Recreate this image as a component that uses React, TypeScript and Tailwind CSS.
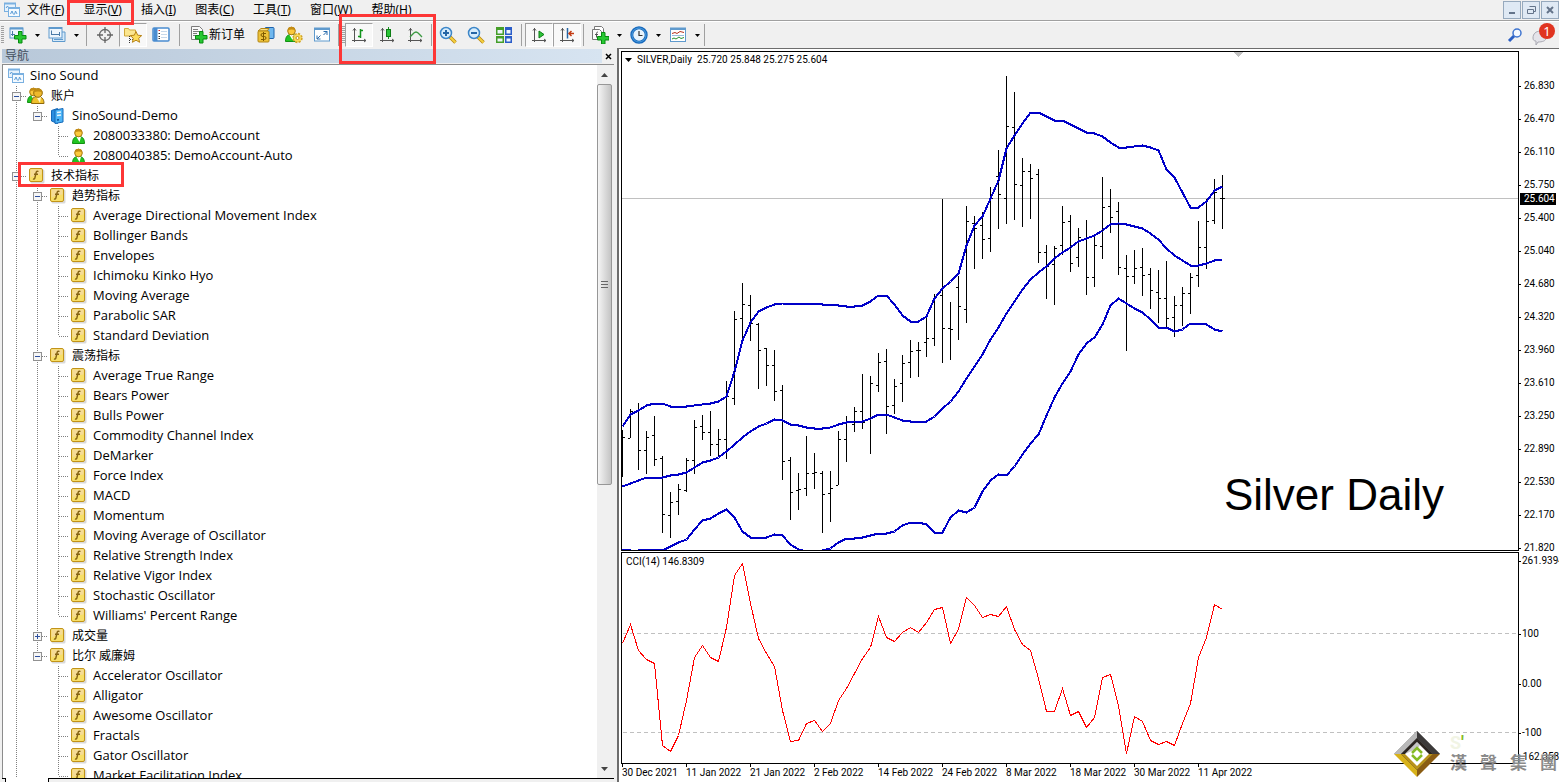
import { useState } from 'react'
import type { ReactNode } from 'react'
import clsx from 'clsx'

type TreeNode = {
    label: string
    icon: 'terminal' | 'accounts' | 'server' | 'user' | 'fn'
    children?: TreeNode[]
    closed?: boolean
    marked?: boolean
}

const fn = (label: string): TreeNode => ({ label, icon: 'fn' })

const TREE: TreeNode[] = [
    {
        label: '账户',
        icon: 'accounts',
        children: [
            {
                label: 'SinoSound-Demo',
                icon: 'server',
                children: [
                    { label: '2080033380: DemoAccount', icon: 'user' },
                    { label: '2080040385: DemoAccount-Auto', icon: 'user' },
                ],
            },
        ],
    },
    {
        label: '技术指标',
        icon: 'fn',
        marked: true,
        children: [
            {
                label: '趋势指标',
                icon: 'fn',
                children: [
                    fn('Average Directional Movement Index'),
                    fn('Bollinger Bands'),
                    fn('Envelopes'),
                    fn('Ichimoku Kinko Hyo'),
                    fn('Moving Average'),
                    fn('Parabolic SAR'),
                    fn('Standard Deviation'),
                ],
            },
            {
                label: '震荡指标',
                icon: 'fn',
                children: [
                    fn('Average True Range'),
                    fn('Bears Power'),
                    fn('Bulls Power'),
                    fn('Commodity Channel Index'),
                    fn('DeMarker'),
                    fn('Force Index'),
                    fn('MACD'),
                    fn('Momentum'),
                    fn('Moving Average of Oscillator'),
                    fn('Relative Strength Index'),
                    fn('Relative Vigor Index'),
                    fn('Stochastic Oscillator'),
                    fn("Williams' Percent Range"),
                ],
            },
            { label: '成交量', icon: 'fn', closed: true, children: [fn('Volumes')] },
            {
                label: '比尔 威廉姆',
                icon: 'fn',
                children: [
                    fn('Accelerator Oscillator'),
                    fn('Alligator'),
                    fn('Awesome Oscillator'),
                    fn('Fractals'),
                    fn('Gator Oscillator'),
                    fn('Market Facilitation Index'),
                ],
            },
        ],
    },
]

const MENU = [
    ['文件', 'F'],
    ['显示', 'V'],
    ['插入', 'I'],
    ['图表', 'C'],
    ['工具', 'T'],
    ['窗口', 'W'],
    ['帮助', 'H'],
]

// chart geometry: one bar every 8px, y values are measured from the top of the window
const STEP = 8
const PRICE_TOP = 52
const CCI_TOP = 553

// [high, low, open, close]
const BARS = [
    [430, 477, 437, 437], [409, 438, 438, 411], [403, 470, 410, 450], [431, 474, 450, 437],
    [416, 466, 435, 459], [456, 533, 458, 514], [492, 538, 515, 502], [484, 515, 501, 489],
    [458, 492, 490, 460], [420, 474, 460, 427], [415, 440, 426, 432], [411, 456, 432, 444],
    [429, 456, 444, 439], [381, 459, 439, 396], [311, 405, 398, 319], [283, 343, 318, 304],
    [295, 341, 305, 323], [323, 389, 324, 350], [348, 386, 348, 365], [350, 401, 365, 391],
    [385, 480, 390, 461], [457, 520, 460, 492], [473, 510, 490, 489], [436, 496, 488, 473],
    [453, 489, 473, 472], [471, 533, 473, 494], [471, 522, 493, 488], [431, 485, 485, 439],
    [416, 462, 439, 422], [407, 432, 424, 411], [374, 429, 411, 422], [376, 454, 418, 383],
    [353, 392, 385, 362], [349, 434, 361, 406], [379, 414, 405, 386], [355, 402, 383, 363],
    [340, 378, 362, 351], [342, 377, 350, 350], [317, 357, 342, 338], [294, 346, 338, 297],
    [199, 363, 295, 328], [302, 360, 328, 329], [276, 340, 287, 306], [206, 323, 309, 221],
    [216, 269, 223, 228], [212, 259, 225, 239], [187, 252, 238, 198], [150, 229, 176, 194],
    [76, 224, 198, 126], [92, 220, 127, 184], [158, 227, 185, 171], [164, 219, 171, 178],
    [169, 263, 174, 252], [245, 299, 252, 266], [246, 305, 264, 248], [206, 255, 245, 222],
    [215, 272, 221, 263], [228, 267, 257, 237], [220, 295, 238, 277], [235, 287, 277, 245],
    [177, 259, 246, 207], [189, 233, 206, 217], [202, 275, 211, 267], [255, 351, 268, 276],
    [250, 284, 276, 268], [248, 296, 267, 275], [268, 309, 274, 290], [270, 323, 292, 298],
    [261, 327, 298, 318], [296, 337, 317, 305], [287, 326, 305, 293], [273, 314, 293, 277],
    [221, 287, 275, 247], [199, 269, 247, 221], [179, 224, 220, 192], [175, 229, 198, 198],
]

const UPPER = [
    426, 414, 410, 405, 403, 403, 406, 406, 406, 405, 404, 403, 401, 396, 371, 340, 322, 311, 307, 304,
    303, 303, 303, 303, 303, 304, 304, 305, 306, 306, 305, 301, 295, 295, 304, 315, 321, 321, 316, 298,
    288, 281, 273, 245, 225, 216, 198, 180, 148, 135, 123, 112, 112, 116, 120, 120, 124, 128, 132, 133,
    136, 142, 147, 147, 146, 145, 147, 150, 169, 177, 192, 207, 207, 201, 190, 186,
]

const MIDDLE = [
    486, 483, 480, 477, 477, 477, 475, 474, 472, 467, 462, 460, 457, 451, 444, 437, 431, 426, 423, 419,
    420, 424, 425, 427, 428, 428, 427, 424, 422, 421, 421, 418, 414, 414, 417, 420, 421, 421, 421, 416,
    408, 401, 391, 378, 366, 354, 339, 327, 313, 301, 289, 279, 272, 266, 258, 252, 247, 241, 238, 235,
    230, 224, 223, 224, 226, 228, 233, 239, 248, 255, 260, 265, 265, 263, 260, 259,
]

const LOWER = [
    549, 550, 550, 549, 549, 550, 546, 542, 539, 529, 520, 518, 513, 509, 517, 531, 537, 537, 537, 534,
    535, 544, 549, 551, 551, 550, 548, 542, 538, 538, 537, 535, 533, 533, 531, 525, 522, 522, 524, 532,
    532, 517, 510, 512, 507, 491, 480, 474, 475, 466, 454, 443, 434, 415, 397, 383, 371, 354, 343, 337,
    324, 305, 298, 303, 308, 312, 319, 327, 327, 331, 329, 323, 323, 324, 329, 331,
]

const CCI = [
    643, 624, 650, 659, 663, 745, 751, 735, 700, 657, 645, 657, 661, 627, 575, 563, 603, 638, 653, 666,
    710, 741, 740, 723, 720, 731, 723, 700, 688, 673, 658, 647, 616, 637, 641, 632, 627, 632, 622, 609,
    607, 643, 629, 597, 605, 617, 614, 616, 606, 629, 644, 650, 678, 711, 711, 688, 715, 711, 727, 717,
    677, 674, 705, 753, 716, 721, 740, 744, 741, 745, 723, 703, 657, 637, 604, 609,
]

const PRICES = [
    '26.830', '26.470', '26.110', '25.750', '25.400', '25.040', '24.680', '24.320', '23.960', '23.610',
    '23.250', '22.890', '22.530', '22.170', '21.820',
]

const DATES = [
    '30 Dec 2021', '11 Jan 2022', '21 Jan 2022', '2 Feb 2022', '14 Feb 2022', '24 Feb 2022', '8 Mar 2022',
    '18 Mar 2022', '30 Mar 2022', '11 Apr 2022',
]

const points = (ys: number[], top: number) => ys.map((y, i) => `${i * STEP + 0.5},${y - top + 0.5}`).join(' ')

/* ---------- icons ---------- */

const Svg = ({ size = 18, children }: { size?: number; children: ReactNode }) => (
    <svg width={size} height={size} viewBox={`0 0 ${size} ${size}`} fill="none" className="shrink-0">
        {children}
    </svg>
)

const TerminalIcon = () => (
    <Svg size={16}>
        <rect x=".5" y="1.500" width="11" height="8" fill="#e6f2fc" stroke="#7ab0e0" />
        <path d="M0 1.500h12" stroke="#7ab0e0" strokeWidth="2" />
        <path d="M2 6l1.500-2L5 6.500" stroke="#5b9bd5" />
        <rect x="4.500" y="5.500" width="11" height="9" fill="#f4faff" stroke="#7ab0e0" />
        <path d="M4 6h12" stroke="#7ab0e0" strokeWidth="2" />
        <path d="M6.500 12l1.500-3 1.500 3.500M10.500 12.500l1-3.500 1.500 3" stroke="#5b9bd5" />
    </Svg>
)

const Person = ({ x = 0, body = '#22c422', edge = '#129012' }) => (
    <g transform={`translate(${x} 0)`}>
        <path d="M.5 15.500c0-5 2-7 6-7s6 2 6 7z" fill={body} stroke={edge} />
        <path d="M4.500 9l3 5 1.500-5z" fill="#fff" />
        <circle cx="6.500" cy="5" r="3.800" fill="#fbc93c" stroke="#a97a12" />
        <path d="M2.700 4.500c-.5-5 8-5 7.600 0-2-1.500-5-1.500-7.600 0z" fill="#c48c14" />
    </g>
)

const UserIcon = () => (
    <Svg size={16}>
        <Person x={1} />
    </Svg>
)

const AccountsIcon = () => (
    <Svg size={18}>
        <Person x={0} />
        <g transform="translate(5 1)">
            <path d="M-.5 15.500c0-5 2-7 6-7s6.500 2 6.500 7z" fill="#efc02c" stroke="#8f690c" />
            <path d="M4.500 9l3.500 6 1-6z" fill="#fff6c8" />
            <circle cx="6" cy="5" r="4.300" fill="#efb92c" stroke="#8f690c" />
            <path d="M1.500 4.500c-.5-5.500 9.500-5.500 9 0-3-1.500-6-1.500-9 0z" fill="#bf8c14" />
        </g>
    </Svg>
)

const ServerIcon = () => (
    <Svg size={16}>
        <path d="M1.500 2.500l6-2v15l-6-2.500z" fill="#2b8ee0" stroke="#1468b8" />
        <path d="M5 2l8-1.500v13.500l-8 1.500z" fill="#4cb4f6" stroke="#1468b8" />
        <path d="M7 4.500l4-.6M7 7.500l4-.6" stroke="#e6f6ff" strokeWidth="1.500" />
        <path d="M7 12l2-.3" stroke="#0d4f96" strokeWidth="1.500" />
    </Svg>
)

const FnIcon = () => (
    <Svg size={16}>
        <rect x="1.500" y="1.500" width="14" height="14" rx="1.500" fill="#000" opacity=".15" />
        <rect x=".5" y=".5" width="13" height="13" rx="1.500" fill="#f7df68" stroke="#c19318" />
        <path d="M1.500 1.500h11v5q-6 0-11 3z" fill="#f4d9a0" opacity=".8" />
        <path d="M9.500 3.500c-1.500-.8-2.200 0-2.500 1.500L6 9.500C5.700 11 5 11.300 4 10.800M5 6.200h4" stroke="#866414" strokeWidth="1.400" />
    </Svg>
)

const Plus = ({ x = 5, y = 5 }) => (
    <path
        transform={`translate(${x} ${y})`}
        d="M4.500.5h3.500v4h4v3.500h-4v4h-3.500v-4h-4v-3.500h4z"
        fill="#27c832"
        stroke="#078a10"
    />
)

const NewChartIcon = () => (
    <Svg>
        <rect x="1" y="2" width="13" height="10" fill="#eef6fd" stroke="#5f9acd" />
        <path d="M1 2.500h13" stroke="#5f9acd" strokeWidth="2" />
        <path d="M3.500 5v5M2 8.500h4M9.500 5v4" stroke="#4a7ba8" />
        <Plus />
    </Svg>
)

const ProfilesIcon = () => (
    <Svg>
        <path d="M4.500 5v10.500h12.500V6H14" fill="#d6e9f8" stroke="#5f9acd" />
        <rect x="1" y="1.500" width="13" height="10.500" fill="#eef6fd" stroke="#5f9acd" />
        <path d="M1 2h13" stroke="#5f9acd" strokeWidth="2" />
        <path d="M3.500 4.500v4M11.500 6v4M3 8.500h9" stroke="#4a7ba8" />
        <path d="M6 13.500h9" stroke="#5f9acd" />
    </Svg>
)

const CrosshairIcon = () => (
    <Svg>
        <circle cx="9" cy="9" r="5.500" stroke="#666" strokeWidth="1.300" />
        <path d="M9 1v6M9 11v6M1 9h6M11 9h6" stroke="#666" strokeWidth="1.300" />
    </Svg>
)

const FolderStarIcon = () => (
    <Svg>
        <path d="M.5 2.500h4l1 1.500h6v6H.5z" fill="#fbe690" stroke="#d0a83a" />
        <path d="M5.500 10v7M6 13.500h3" stroke="#333" strokeDasharray="1 1" />
        <path d="M12 5.500l1.700 3.700 4 .4-3 2.700.9 4-3.600-2.100-3.600 2.100.9-4-3-2.700 4-.4z" fill="#fcdc5c" stroke="#b88418" />
    </Svg>
)

const DataWindowIcon = () => (
    <Svg>
        <rect x="1" y="2" width="16" height="13" rx="1" fill="#fff" stroke="#4a8cd0" strokeWidth="1.500" />
        <path d="M3.500 2v13" stroke="#4a8cd0" strokeWidth="4" />
        <path d="M6.500 4.500h1.500" stroke="#d22" />
        <path d="M6.500 7.500h1.500M6.500 10.500h1.500M6.500 12.500h1.500" stroke="#333" />
        <path d="M9 5.500h6M9 8.500h6M9 11.500h6" stroke="#c6d8ea" />
    </Svg>
)

const NewOrderIcon = () => (
    <Svg>
        <path d="M1.500.5h8l3 3v10h-11z" fill="#fafafa" stroke="#7c7c7c" />
        <path d="M3 3.500h5M3 5.500h7M3 7.500h4M3 9.500h3" stroke="#7c7c7c" />
        <Plus />
    </Svg>
)

const DollarIcon = () => (
    <Svg>
        <rect x="8" y="1.500" width="9" height="11" rx="1" fill="#6fb7ee" stroke="#1d62ad" />
        <path d="M1 5l3-2.500h8l-2 2.500z" fill="#f9e08a" stroke="#b38613" />
        <rect x="1" y="5" width="11" height="11" rx="1" fill="#edc23a" stroke="#b38613" />
        <path d="M9 7.500H5.500Q4 7.500 4 9t2 1.500h1.500Q9 10.500 9 12t-1.500 1.500H4M6.500 6v9" stroke="#7c5800" />
    </Svg>
)

const ExpertsIcon = () => (
    <Svg>
        <Person x={0} />
        <circle cx="12.500" cy="12" r="4.200" fill="#f8d95a" stroke="#d1a327" strokeWidth="2" strokeDasharray="2 1.300" />
        <circle cx="12.500" cy="12" r="3.600" fill="#f8d95a" />
        <circle cx="12.500" cy="12" r="1.500" fill="#fff" stroke="#c0901a" />
    </Svg>
)

const FullscreenIcon = () => (
    <Svg>
        <rect x="1.500" y="2" width="15" height="13" fill="#fff" stroke="#5f9acd" />
        <path d="M1 3h16" stroke="#5f9acd" strokeWidth="2" />
        <path d="M10.500 5.500h3.500v3.500M14 5.500l-3.500 3.500M7.500 13H4V9.500M4 13l3.500-3.500" stroke="#2a6cad" />
    </Svg>
)

const Axes = () => (
    <path
        d="M4.500 2v14M2 14.500h14M3 4.500l1.500-2 1.500 2M14 13l2 1.500-2 1.500"
        stroke="#555"
        strokeWidth="1"
    />
)

const BarChartIcon = () => (
    <Svg>
        <Axes />
        <path d="M10.500 3v9M8 10.500h2.500M10.500 4.500H13" stroke="#12931c" strokeWidth="1.500" />
    </Svg>
)

const CandleIcon = () => (
    <Svg>
        <Axes />
        <path d="M10.500 1v12" stroke="#12931c" />
        <rect x="8.500" y="3.500" width="4" height="7" fill="#29c436" stroke="#0d7d15" />
    </Svg>
)

const LineChartIcon = () => (
    <Svg>
        <Axes />
        <path d="M4 11c3-3 4-5 6-5s3 2 6 5" stroke="#3d9a43" strokeWidth="1.300" />
    </Svg>
)

const ZoomIcon = ({ plus = false }) => (
    <Svg>
        <path d="M11 11l5.500 5.500" stroke="#b98712" strokeWidth="3.500" />
        <path d="M11 11l5.500 5.500" stroke="#f5d040" strokeWidth="2" />
        <circle cx="7" cy="7" r="5.500" fill="#d7edfc" stroke="#3c86c8" strokeWidth="1.500" />
        <path d={plus ? 'M4 7h6M7 4v6' : 'M4 7h6'} stroke="#2566a5" strokeWidth="2" />
    </Svg>
)

const TileIcon = () => (
    <Svg>
        <path d="M1 1h8v8H1zM1 10h8v7H1z" fill="#459e28" />
        <path d="M10 1h7v8h-7zM10 10h7v7h-7z" fill="#2a5cc8" />
        <path d="M2.500 4h5v3.500h-5zM11.500 4h4v3.500h-4zM2.500 12.500h5v3h-5zM11.500 12.500h4v3h-4z" fill="#eef5fb" />
    </Svg>
)

const ScrollIcon = () => (
    <Svg>
        <Axes />
        <path d="M9 5l5 3.500L9 12z" fill="#2fc43a" stroke="#0d7d15" />
    </Svg>
)

const ShiftIcon = () => (
    <Svg>
        <Axes />
        <path d="M9.500 2v10.500" stroke="#2566a5" strokeWidth="1.500" />
        <path d="M16 7.500h-4M13.500 5l-2.500 2.500 2.500 2.500" stroke="#c33a12" strokeWidth="1.500" />
    </Svg>
)

const IndicatorIcon = () => (
    <Svg>
        <path d="M3.500 3.500V.5h7l2 2v9" fill="#fff" stroke="#777" />
        <path d="M1.500 3.500h7l2 2v8h-9z" fill="#fafafa" stroke="#777" />
        <path d="M7 6c-1.500 0-1.500 1-1.500 2v3.500M4 8.500h3" stroke="#555" />
        <Plus x={6} y={6} />
    </Svg>
)

const ClockIcon = () => (
    <Svg>
        <circle cx="9" cy="9" r="7.200" fill="#e8f4fd" stroke="#1668bc" strokeWidth="3" />
        <circle cx="9" cy="9" r="7" stroke="#4d9fe0" />
        <path d="M9 5v4.500h3.500" stroke="#333" strokeWidth="1.200" />
    </Svg>
)

const TemplateIcon = () => (
    <Svg>
        <rect x="1.500" y="2" width="15" height="13.500" fill="#fff" stroke="#5f9acd" />
        <path d="M1 3h16" stroke="#5f9acd" strokeWidth="2" />
        <path d="M3 7.500l3-1 2 1 3-2 4 1" stroke="#b8321c" />
        <path d="M3 9.500h12" stroke="#9bbddb" />
        <path d="M3 13l2-1 2 1 3-2 2 1.500 3-1" stroke="#27912f" />
    </Svg>
)

const ICONS = {
    terminal: <TerminalIcon />,
    accounts: <AccountsIcon />,
    server: <ServerIcon />,
    user: <UserIcon />,
    fn: <FnIcon />,
}

/* ---------- toolbar ---------- */

const Grip = () => (
    <div className="my-1 ml-px w-[3px] self-stretch bg-[repeating-linear-gradient(#a0a0a0_0_1px,#f0f0f0_1px_2px)]" />
)

const Sep = ({ className = 'w-[9px]' }) => (
    <div className={clsx('flex h-[22px] shrink-0 justify-center', className)}>
        <div className="w-px bg-[#a0a0a0]" />
    </div>
)

const Tool = ({ label, pressed, children }: { label: string; pressed?: boolean; children: ReactNode }) => (
    <button
        aria-label={label}
        className={clsx(
            'flex h-6 w-7 shrink-0 items-center justify-center border',
            pressed ? 'border-[#a0a0a0] border-r-white border-b-white bg-[#f8f8f8]' : 'border-transparent'
        )}
    >
        {children}
    </button>
)

const Drop = ({ label, children }: { label: string; children: ReactNode }) => (
    <>
        <Tool label={label}>{children}</Tool>
        <button aria-label={`${label} ▾`} className="flex h-6 w-[11px] shrink-0 items-center justify-center">
            <svg width="5" height="3" className="fill-black">
                <path d="M0 0h5L2.500 3z" />
            </svg>
        </button>
    </>
)

const Mark = ({ className }: { className: string }) => (
    <span className={clsx('pointer-events-none absolute z-10 border-[3px] border-[#fd3636]', className)} />
)

const MenuBar = () => (
    <nav className="flex h-[21px] items-center border-b border-[#a0a0a0] pl-1">
        <TerminalIcon />
        <div className="ml-[7px] flex flex-1 gap-[19px] text-[12px] leading-4">
            {MENU.map(([name, key]) => (
                <button key={key} className="relative whitespace-nowrap">
                    {name}(<u>{key}</u>)
                    {key === 'V' && <Mark className="-top-[2px] -right-[12px] -bottom-[7px] -left-[16px]" />}
                </button>
            ))}
        </div>
        <div className="flex gap-px">
            {['M5 11h6', 'M6.500 4.500h6v5h-2M4.500 7.500h6v4h-6z', 'M5 5l6 6M11 5l-6 6'].map((d, i) => (
                <button
                    key={d}
                    aria-label={['Minimize', 'Restore', 'Close'][i]}
                    className="flex h-[18px] w-[18px] items-center justify-center border border-[#96a9bd] bg-[#dfe9f4]"
                >
                    <svg width="16" height="16" fill="none" stroke="#64748a" strokeWidth={i === 1 ? 1 : 2}>
                        <path d={d} />
                    </svg>
                </button>
            ))}
        </div>
    </nav>
)

const Toolbar = () => (
    <div className="flex h-[27px] items-center border-t border-white">
        <Grip />
        <Drop label="New chart">
            <NewChartIcon />
        </Drop>
        <Drop label="Profiles">
            <ProfilesIcon />
        </Drop>
        <Sep />
        <Tool label="Crosshair">
            <CrosshairIcon />
        </Tool>
        <Tool label="Navigator" pressed>
            <FolderStarIcon />
        </Tool>
        <Tool label="Market watch">
            <DataWindowIcon />
        </Tool>
        <Sep />
        <button className="flex h-6 items-center gap-px pr-[7px] pl-[6px] text-[12px] whitespace-nowrap">
            <NewOrderIcon />
            新订单
        </button>
        <Tool label="MetaEditor">
            <DollarIcon />
        </Tool>
        <Tool label="Experts">
            <ExpertsIcon />
        </Tool>
        <Tool label="Full screen">
            <FullscreenIcon />
        </Tool>
        <Sep className="w-[5px]" />
        <Grip />
        <div className="relative flex">
            <Tool label="Bar chart" pressed>
                <BarChartIcon />
            </Tool>
            <Tool label="Candlesticks">
                <CandleIcon />
            </Tool>
            <Tool label="Line chart">
                <LineChartIcon />
            </Tool>
            <Mark className="-top-[9px] -right-[7px] -bottom-[17px] -left-[6px]" />
        </div>
        <Sep className="w-[5px]" />
        <Tool label="Zoom in">
            <ZoomIcon plus />
        </Tool>
        <Tool label="Zoom out">
            <ZoomIcon />
        </Tool>
        <Tool label="Tile windows">
            <TileIcon />
        </Tool>
        <Sep className="w-[7px]" />
        <Tool label="Auto scroll" pressed>
            <ScrollIcon />
        </Tool>
        <Tool label="Chart shift" pressed>
            <ShiftIcon />
        </Tool>
        <Sep className="w-[5px]" />
        <Drop label="Indicators">
            <IndicatorIcon />
        </Drop>
        <Drop label="Periods">
            <ClockIcon />
        </Drop>
        <Drop label="Templates">
            <TemplateIcon />
        </Drop>
        <Sep className="w-[3px]" />
        <div className="ml-auto flex items-center gap-2 pr-1">
            <button aria-label="Search">
                <Svg size={16}>
                    <path d="M8 8l-6 6" stroke="#2b5fc4" strokeWidth="3" />
                    <circle cx="10" cy="6" r="4" fill="#f5f9ff" stroke="#3f74cf" strokeWidth="1.500" />
                </Svg>
            </button>
            <button aria-label="Messages" className="relative h-6 w-6">
                <svg width="24" height="24" fill="none">
                    <path d="M2 15c0-9 13-9 13 0 0 3-4 4-8 4l-2 3v-4c-2 0-3-1-3-3z" fill="#e4e4ea" stroke="#a9a9b2" />
                </svg>
                <span className="absolute top-0 right-0 h-4 w-4 rounded-full bg-[#e03420] text-center text-[13px] leading-4 text-white">
                    1
                </span>
            </button>
        </div>
    </div>
)

/* ---------- navigator ---------- */

// one 21px column of the tree's dotted lines
const Guide = ({ up, down, right }: { up?: boolean; down?: boolean; right?: boolean }) => (
    <svg width="21" height="20" stroke="#808080" strokeDasharray="1 1" shapeRendering="crispEdges" className="shrink-0">
        {up && <path d="M10.500 0v10" />}
        {down && <path d="M10.500 10v10" />}
        {right && <path d="M11 10.500h10" />}
    </svg>
)

const Expander = ({ open }: { open: boolean }) => (
    <svg width="9" height="9" fill="none" shapeRendering="crispEdges">
        <rect x=".5" y=".5" width="8" height="8" fill="#f6f6f6" stroke="#919191" />
        <path d={open ? 'M2 4.500h5' : 'M2 4.500h5M4.500 2v5'} stroke="#2d4f9e" />
    </svg>
)

const isCjk = (label: string) => /[\u4e00-\u9fff]/.test(label)

const Branch = ({ node, trail, last }: { node: TreeNode; trail: boolean[]; last: boolean }) => {
    const [open, setOpen] = useState(!node.closed)

    return (
        <li>
            <div className="relative flex h-5 items-center">
                {trail.map((on, i) => (
                    <Guide key={i} up={on} down={on} />
                ))}
                <span className="relative flex">
                    <Guide up down={!last} right />
                    {node.children && (
                        <button
                            aria-label={node.label}
                            aria-expanded={open}
                            onClick={() => setOpen(!open)}
                            className="absolute top-[6px] left-[6px]"
                        >
                            <Expander open={open} />
                        </button>
                    )}
                </span>
                <span className="relative flex h-5 items-center">
                    <span className={clsx('flex w-6', node.icon !== 'accounts' && 'pl-[2px]')}>{ICONS[node.icon]}</span>
                    <span className={clsx('whitespace-nowrap', isCjk(node.label) ? 'text-[12px]' : 'pb-[2px]')}>
                        {node.label}
                    </span>
                    {node.marked && <Mark className="-top-[4px] -right-[25px] -bottom-[1px] -left-[9px]" />}
                </span>
            </div>
            {node.children && open && (
                <ul>
                    {node.children.map((child, i) => (
                        <Branch
                            key={child.label}
                            node={child}
                            trail={[...trail, !last]}
                            last={i === node.children!.length - 1}
                        />
                    ))}
                </ul>
            )}
        </li>
    )
}

const Navigator = () => (
    <aside className="flex w-[614px] shrink-0 flex-col pl-[2px]">
        <header className="flex h-4 items-center justify-between">
            <h2 className="h-[14px] flex-1 bg-linear-to-r from-[#b8c8d9] to-[#d7e4f1] pl-[3px] text-[12px] leading-[14px] text-[#44505e]">
                导航
            </h2>
            <button aria-label="Close" className="flex w-3 justify-center">
                <svg width="7" height="7" stroke="#000" strokeWidth="1.500">
                    <path d="M1 1l5 5M6 1L1 6" />
                </svg>
            </button>
        </header>
        <div className="flex h-[714px] overflow-hidden border-t border-l border-[#8c8c8c] bg-white">
            <div className="flex-1 overflow-hidden pt-px pl-[3px] font-['Open_Sans','Noto_Sans_CJK_SC',sans-serif] text-[13px] leading-[18px]">
                <div className="flex h-5 items-center">
                    <span className="w-6 pl-[2px]">
                        <TerminalIcon />
                    </span>
                    <span className="pb-[2px]">Sino Sound</span>
                </div>
                <ul>
                    {TREE.map((node) => (
                        <Branch key={node.label} node={node} trail={[]} last={false} />
                    ))}
                </ul>
            </div>
            <div className="flex w-[15px] flex-col items-center bg-[#f0f0f0]">
                <button aria-label="Scroll up" className="flex h-[19px] items-center">
                    <svg width="7" height="4" fill="#444">
                        <path d="M0 4l3.500-4L7 4z" />
                    </svg>
                </button>
                <div className="flex h-[401px] w-full flex-col items-center justify-center gap-[2px] rounded-[2px] border border-[#979797] bg-linear-to-r from-[#f5f5f5] via-[#dcdcdc] to-[#c4c4c4]">
                    <i className="h-px w-[7px] bg-[#666]" />
                    <i className="h-px w-[7px] bg-[#666]" />
                    <i className="h-px w-[7px] bg-[#666]" />
                </div>
                <button aria-label="Scroll down" className="mt-auto flex h-[18px] items-center">
                    <svg width="7" height="4" fill="#444">
                        <path d="M0 0h7L3.500 4z" />
                    </svg>
                </button>
            </div>
            <div className="w-[2px] bg-[#f0f0f0]" />
        </div>
        <div className="flex h-1">
            <div className="w-1 border-t border-r border-black" />
            <div className="w-[43px] border-r border-black bg-white" />
            <div className="flex-1 border-t border-black" />
        </div>
    </aside>
)

/* ---------- chart ---------- */

const Band = ({ ys }: { ys: number[] }) => (
    <polyline points={points(ys, PRICE_TOP)} fill="none" stroke="#0000c8" strokeWidth="2" />
)

const PricePlot = () => (
    <svg className="h-full w-full" shapeRendering="crispEdges">
        <path d="M0 146.500h3000" stroke="#c0c0c0" />
        {BARS.map(([high, low, open, close], i) => (
            <path
                key={i}
                transform={`translate(${i * STEP} ${-PRICE_TOP})`}
                d={`M.5 ${high}V${low}M-2 ${open + 0.5}H0M1 ${close + 0.5}H3`}
                stroke="#000"
            />
        ))}
        <Band ys={UPPER} />
        <Band ys={MIDDLE} />
        <Band ys={LOWER} />
        <path d="M612 0h9l-4.500 5z" fill="#c0c0c0" />
    </svg>
)

const CciPlot = () => (
    <svg className="h-full w-full" shapeRendering="crispEdges">
        <path d="M1 80.500h3000M1 179.500h3000" stroke="#c0c0c0" strokeDasharray="4 3" />
        <polyline points={points(CCI, CCI_TOP)} fill="none" stroke="#f00" />
    </svg>
)

const AxisLabel = ({ tight, children }: { tight?: boolean; children: ReactNode }) => (
    <div className={clsx('flex items-center', tight ? 'gap-px' : 'gap-[3px]')}>
        <i className="h-px w-[2px] shrink-0 bg-black" />
        {children}
    </div>
)

const Watermark = () => (
    <div className="pointer-events-none absolute right-[2px] bottom-[5px] flex items-end gap-[10px]">
        <svg width="46" height="46" viewBox="0 0 46 46">
            <path d="M23 0l23 23H0z" fill="#6f6f6f" />
            <path d="M23 0L0 23h7L23 7z" fill="#b9b9b9" />
            <path d="M23 0l23 23h-7L23 7z" fill="#3c3a3a" />
            <path d="M0 23l23 23V38L8 23z" fill="#d8b21a" />
            <path d="M46 23L23 46V38l15-15z" fill="#8a5c12" />
            <path d="M23 7l16 16-16 16L7 23z" fill="#2c2622" />
            <path d="M7 23h32L23 39z" fill="#b8921a" />
            <path d="M23 11l12 12-12 12-12-12z" fill="#fff" />
            <path d="M23 11l3 3-2 3-13 6z" fill="#8b8b8b" opacity=".5" />
            <path d="M18 22l5-5 5 5M18 24l5 5 5-5" fill="none" stroke="#86bc25" strokeWidth="2.500" />
        </svg>
        <div className="flex flex-col">
            <span className="text-[18px] leading-3 font-bold text-[#f1f4e4]">
                S<span className="text-[#86bc25]">'</span>
            </span>
            <div className="flex gap-[13px] text-[17px] leading-7 font-bold text-[#8b8b8b]">
                <span>漢</span>
                <span>聲</span>
                <span>集</span>
                <span>團</span>
            </div>
        </div>
    </div>
)

const Chart = () => (
    <main className="relative ml-[3px] grid min-w-0 flex-1 grid-cols-[1fr_40px] content-start border-t border-l-2 border-[#6d6d6d] bg-white pt-[2px] pl-[2px] font-['Roboto','Noto_Sans_CJK_SC',sans-serif] text-[10px] leading-3">
        <section className="relative h-[500px] overflow-hidden border border-black">
            <PricePlot />
            <div className="absolute top-[2px] left-[3px] flex items-center gap-[5px] whitespace-pre">
                <svg width="7" height="4">
                    <path d="M0 0h7L3.500 4z" />
                </svg>
                <span>SILVER,Daily  25.720 25.848 25.275 25.604</span>
            </div>
            <p className="absolute right-[74px] bottom-[30px] font-['Liberation_Sans'] text-[44px] leading-[50px]">
                Silver Daily
            </p>
        </section>
        <div className="relative flex h-[500px] flex-col gap-[21px] pt-[29px]">
            {PRICES.map((p) => (
                <AxisLabel key={p}>{p}</AxisLabel>
            ))}
            <span className="absolute top-[142px] left-px w-[36px] bg-black pl-1 text-white">25.604</span>
        </div>
        <section className="relative mt-px h-[212px] overflow-hidden border border-black">
            <CciPlot />
            <p className="absolute top-[3px] left-1">CCI(14) 146.8309</p>
        </section>
        <div className="relative mt-px flex flex-col pt-[3px]">
            <AxisLabel tight>261.9394</AxisLabel>
            <div className="pt-[61px]">
                <AxisLabel tight>100</AxisLabel>
            </div>
            <div className="pt-[38px]">
                <AxisLabel tight>0.00</AxisLabel>
            </div>
            <div className="pt-[37px]">
                <AxisLabel tight>-100</AxisLabel>
            </div>
            <div className="pt-3 pl-px">-162.3586</div>
        </div>
        <div className="col-span-2 flex pl-px">
            {DATES.map((d) => (
                <div key={d} className="w-16 shrink-0 whitespace-nowrap">
                    <i className="block h-[3px] w-px bg-black" />
                    {d}
                </div>
            ))}
        </div>
        <Watermark />
    </main>
)

const App = () => {
    return (
        <div className="flex h-screen flex-col overflow-hidden bg-[#f0f0f0] font-['Noto_Sans','Noto_Sans_CJK_SC',sans-serif] text-black">
            <MenuBar />
            <Toolbar />
            <div className="flex min-h-0 flex-1">
                <Navigator />
                <Chart />
            </div>
        </div>
    )
}

export default App
